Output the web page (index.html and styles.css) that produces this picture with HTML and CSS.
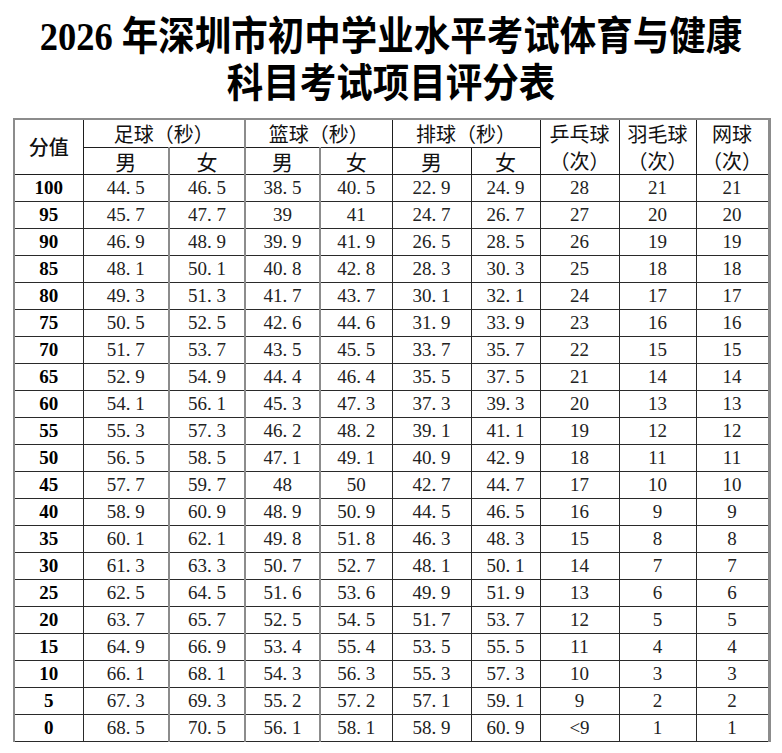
FILE: index.html
```html
<!DOCTYPE html>
<html lang="zh-CN">
<head>
<meta charset="utf-8">
<title>2026年深圳市初中学业水平考试体育与健康科目考试项目评分表</title>
<link rel="stylesheet" href="styles.css">
</head>
<body>
<div class="page">
  <h1 class="title">
    <span class="line">2026 年深圳市初中学业水平考试体育与健康</span>
    <span class="line">科目考试项目评分表</span>
  </h1>
  <table class="score">
    <colgroup>
      <col class="c1"><col class="c2"><col class="c3"><col class="c4"><col class="c5">
      <col class="c6"><col class="c7"><col class="c8"><col class="c9"><col class="c10">
    </colgroup>
    <thead>
      <tr class="h1">
        <th rowspan="2" class="sc">分值</th>
        <th colspan="2">足球（秒）</th>
        <th colspan="2" class="g">篮球（秒）</th>
        <th colspan="2">排球（秒）</th>
        <th rowspan="2" class="two"><span>乒乓球</span><span>（次）</span></th>
        <th rowspan="2" class="two"><span>羽毛球</span><span>（次）</span></th>
        <th rowspan="2" class="two"><span>网球</span><span>（次）</span></th>
      </tr>
      <tr class="h2">
        <th>男</th><th class="g">女</th><th class="g">男</th><th class="g">女</th><th>男</th><th>女</th>
      </tr>
    </thead>
    <tbody>
      <tr><td class="sc">100</td><td>44<i>.</i>5</td><td class="g">46<i>.</i>5</td><td class="g">38<i>.</i>5</td><td class="g">40<i>.</i>5</td><td>22<i>.</i>9</td><td>24<i>.</i>9</td><td>28</td><td>21</td><td>21</td></tr>
      <tr><td class="sc">95</td><td>45<i>.</i>7</td><td class="g">47<i>.</i>7</td><td class="g">39</td><td class="g">41</td><td>24<i>.</i>7</td><td>26<i>.</i>7</td><td>27</td><td>20</td><td>20</td></tr>
      <tr><td class="sc">90</td><td>46<i>.</i>9</td><td class="g">48<i>.</i>9</td><td class="g">39<i>.</i>9</td><td class="g">41<i>.</i>9</td><td>26<i>.</i>5</td><td>28<i>.</i>5</td><td>26</td><td>19</td><td>19</td></tr>
      <tr><td class="sc">85</td><td>48<i>.</i>1</td><td class="g">50<i>.</i>1</td><td class="g">40<i>.</i>8</td><td class="g">42<i>.</i>8</td><td>28<i>.</i>3</td><td>30<i>.</i>3</td><td>25</td><td>18</td><td>18</td></tr>
      <tr><td class="sc">80</td><td>49<i>.</i>3</td><td class="g">51<i>.</i>3</td><td class="g">41<i>.</i>7</td><td class="g">43<i>.</i>7</td><td>30<i>.</i>1</td><td>32<i>.</i>1</td><td>24</td><td>17</td><td>17</td></tr>
      <tr><td class="sc">75</td><td>50<i>.</i>5</td><td class="g">52<i>.</i>5</td><td class="g">42<i>.</i>6</td><td class="g">44<i>.</i>6</td><td>31<i>.</i>9</td><td>33<i>.</i>9</td><td>23</td><td>16</td><td>16</td></tr>
      <tr><td class="sc">70</td><td>51<i>.</i>7</td><td class="g">53<i>.</i>7</td><td class="g">43<i>.</i>5</td><td class="g">45<i>.</i>5</td><td>33<i>.</i>7</td><td>35<i>.</i>7</td><td>22</td><td>15</td><td>15</td></tr>
      <tr><td class="sc">65</td><td>52<i>.</i>9</td><td class="g">54<i>.</i>9</td><td class="g">44<i>.</i>4</td><td class="g">46<i>.</i>4</td><td>35<i>.</i>5</td><td>37<i>.</i>5</td><td>21</td><td>14</td><td>14</td></tr>
      <tr><td class="sc">60</td><td>54<i>.</i>1</td><td class="g">56<i>.</i>1</td><td class="g">45<i>.</i>3</td><td class="g">47<i>.</i>3</td><td>37<i>.</i>3</td><td>39<i>.</i>3</td><td>20</td><td>13</td><td>13</td></tr>
      <tr><td class="sc">55</td><td>55<i>.</i>3</td><td class="g">57<i>.</i>3</td><td class="g">46<i>.</i>2</td><td class="g">48<i>.</i>2</td><td>39<i>.</i>1</td><td>41<i>.</i>1</td><td>19</td><td>12</td><td>12</td></tr>
      <tr><td class="sc">50</td><td>56<i>.</i>5</td><td class="g">58<i>.</i>5</td><td class="g">47<i>.</i>1</td><td class="g">49<i>.</i>1</td><td>40<i>.</i>9</td><td>42<i>.</i>9</td><td>18</td><td>11</td><td>11</td></tr>
      <tr><td class="sc">45</td><td>57<i>.</i>7</td><td class="g">59<i>.</i>7</td><td class="g">48</td><td class="g">50</td><td>42<i>.</i>7</td><td>44<i>.</i>7</td><td>17</td><td>10</td><td>10</td></tr>
      <tr><td class="sc">40</td><td>58<i>.</i>9</td><td class="g">60<i>.</i>9</td><td class="g">48<i>.</i>9</td><td class="g">50<i>.</i>9</td><td>44<i>.</i>5</td><td>46<i>.</i>5</td><td>16</td><td>9</td><td>9</td></tr>
      <tr><td class="sc">35</td><td>60<i>.</i>1</td><td class="g">62<i>.</i>1</td><td class="g">49<i>.</i>8</td><td class="g">51<i>.</i>8</td><td>46<i>.</i>3</td><td>48<i>.</i>3</td><td>15</td><td>8</td><td>8</td></tr>
      <tr><td class="sc">30</td><td>61<i>.</i>3</td><td class="g">63<i>.</i>3</td><td class="g">50<i>.</i>7</td><td class="g">52<i>.</i>7</td><td>48<i>.</i>1</td><td>50<i>.</i>1</td><td>14</td><td>7</td><td>7</td></tr>
      <tr><td class="sc">25</td><td>62<i>.</i>5</td><td class="g">64<i>.</i>5</td><td class="g">51<i>.</i>6</td><td class="g">53<i>.</i>6</td><td>49<i>.</i>9</td><td>51<i>.</i>9</td><td>13</td><td>6</td><td>6</td></tr>
      <tr><td class="sc">20</td><td>63<i>.</i>7</td><td class="g">65<i>.</i>7</td><td class="g">52<i>.</i>5</td><td class="g">54<i>.</i>5</td><td>51<i>.</i>7</td><td>53<i>.</i>7</td><td>12</td><td>5</td><td>5</td></tr>
      <tr><td class="sc">15</td><td>64<i>.</i>9</td><td class="g">66<i>.</i>9</td><td class="g">53<i>.</i>4</td><td class="g">55<i>.</i>4</td><td>53<i>.</i>5</td><td>55<i>.</i>5</td><td>11</td><td>4</td><td>4</td></tr>
      <tr><td class="sc">10</td><td>66<i>.</i>1</td><td class="g">68<i>.</i>1</td><td class="g">54<i>.</i>3</td><td class="g">56<i>.</i>3</td><td>55<i>.</i>3</td><td>57<i>.</i>3</td><td>10</td><td>3</td><td>3</td></tr>
      <tr><td class="sc">5</td><td>67<i>.</i>3</td><td class="g">69<i>.</i>3</td><td class="g">55<i>.</i>2</td><td class="g">57<i>.</i>2</td><td>57<i>.</i>1</td><td>59<i>.</i>1</td><td>9</td><td>2</td><td>2</td></tr>
      <tr><td class="sc">0</td><td>68<i>.</i>5</td><td class="g">70<i>.</i>5</td><td class="g">56<i>.</i>1</td><td class="g">58<i>.</i>1</td><td>58<i>.</i>9</td><td>60<i>.</i>9</td><td>&lt;9</td><td>1</td><td>1</td></tr>
    </tbody>
  </table>
</div>
</body>
</html>
```
FILE: styles.css
```css
html, body {
  margin: 0;
  padding: 0;
  background: #ffffff;
}

.page {
  width: 782px;
  padding-top: 14px;
}

.title {
  margin: 0;
  display: flex;
  flex-direction: column;
  align-items: center;
  font-family: "Liberation Serif", "Noto Sans CJK SC", serif;
  font-weight: 700;
  font-size: 36.5px;
  line-height: 46px;
  color: #000;
}

.title .line {
  display: block;
  white-space: nowrap;
  transform: scaleY(1.08);
}

.title .line + .line {
  margin-top: 1px;
}

.score {
  margin: 11px 0 0 13px;
  width: 755px;
  table-layout: fixed;
  border-collapse: collapse;
  border-top: 2px solid #8c8c8c;
  border-left: 2px solid #8c8c8c;
  border-right: 3px solid #8c8c8c;
  border-bottom: 1px solid #111;
}

.c1 { width: 69px; }
.c2 { width: 86px; }
.c3 { width: 76px; }
.c4 { width: 75px; }
.c5 { width: 72px; }
.c6 { width: 79px; }
.c7 { width: 69px; }
.c8 { width: 79px; }
.c9 { width: 77px; }
.c10 { width: 73px; }

.score th,
.score td {
  border: 1px solid #1e1e1e;
  padding: 0;
  text-align: center;
  vertical-align: middle;
}

.score th {
  font-family: "Noto Sans CJK SC", sans-serif;
  font-weight: 400;
  font-size: 20px;
  line-height: 26px;
  color: #111;
}

.score .h1 th {
  height: 27px;
}

.score .h2 th {
  height: 26px;
  font-size: 21px;
}

.score th.two span {
  display: block;
  height: 27px;
  line-height: 27px;
  overflow: hidden;
}

.score th.sc {
  font-weight: 500;
  font-size: 20px;
}

.score td {
  height: 26px;
  font-family: "Liberation Serif", serif;
  font-size: 19px;
  line-height: 24px;
  color: #222;
  border-color: #2a2a2a;
}

.score td.sc {
  font-weight: 700;
  font-size: 19px;
  color: #000;
}

.score .g {
  border-left: 2px solid #8c8c8c;
}

.score td i {
  font-style: normal;
  display: inline-block;
  width: 0.5em;
  text-align: left;
}
```
